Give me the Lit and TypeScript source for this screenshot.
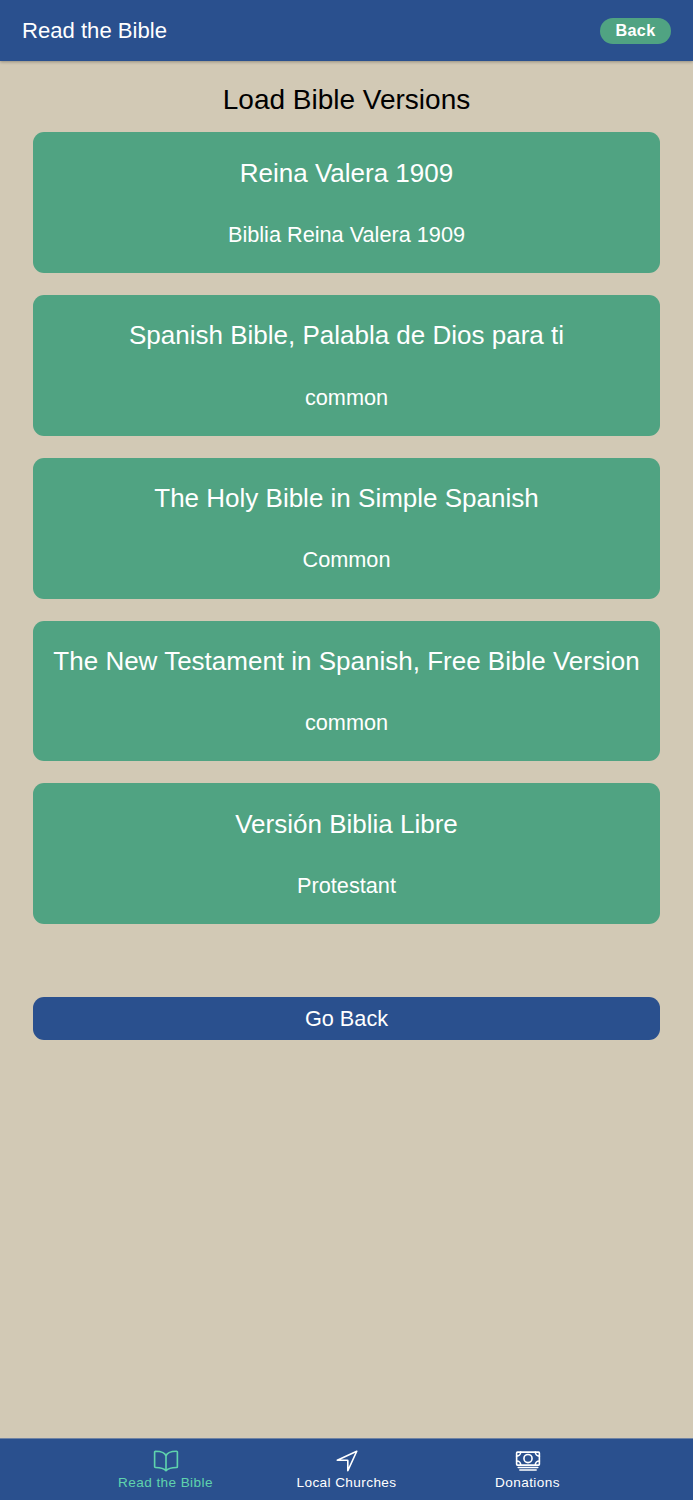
import { LitElement, html, css } from "lit";
import { customElement } from "lit/decorators.js";

const versions = [
  ["Reina Valera 1909", "Biblia Reina Valera 1909"],
  ["Spanish Bible, Palabla de Dios para ti", "common"],
  ["The Holy Bible in Simple Spanish", "Common"],
  ["The New Testament in Spanish, Free Bible Version", "common"],
  ["Versión Biblia Libre", "Protestant"],
];

@customElement("app-root")
export class AppRoot extends LitElement {
  static styles = css`
    :host {
      display: flex;
      flex-direction: column;
      height: 1500px;
      background: #d2c9b5;
      font-family: "Liberation Sans", Arial, sans-serif;
      color: #fff;
      overflow: hidden;
    }
    .header {
      flex: none;
      height: 61px;
      box-sizing: border-box;
      background: #2a508e;
      box-shadow: 0 1px 3px rgba(0, 0, 0, 0.3);
      display: flex;
      align-items: center;
      justify-content: space-between;
      padding: 0 22px;
      position: relative;
    }
    .header-title { font-size: 22.1px; }
    .back {
      background: #50a382;
      border-radius: 13px;
      width: 71px;
      height: 26px;
      display: flex;
      align-items: center;
      justify-content: center;
      font-size: 16.2px;
      font-weight: 700;
      letter-spacing: 0.3px;
    }
    .main {
      flex: 1;
      display: flex;
      flex-direction: column;
      padding: 0 32.6px;
    }
    h1 {
      margin: 0;
      height: 71.2px;
      line-height: 77px;
      text-align: center;
      font-size: 28px;
      font-weight: 400;
      color: #000;
    }
    .list { display: flex; flex-direction: column; gap: 22px; }
    .card {
      height: 140.8px;
      background: #50a382;
      border-radius: 11px;
      display: flex;
      flex-direction: column;
      align-items: center;
      text-align: center;
    }
    .card-title { font-size: 26px; line-height: 31px; margin-top: 25.5px; }
    .card-sub { font-size: 21.7px; line-height: 27px; margin-top: 32.2px; }
    .go {
      margin-top: 72.8px;
      height: 43px;
      box-sizing: border-box;
      padding-top: 1px;
      background: #2a508e;
      border-radius: 11px;
      display: flex;
      align-items: center;
      justify-content: center;
      font-size: 21.7px;
    }
    .tabs {
      flex: none;
      height: 62px;
      box-sizing: border-box;
      background: #2a508e;
      border-top: 1px solid #6f83a4;
      display: grid;
      grid-template-columns: 181px 181px 181px;
      justify-content: center;
    }
    .tab {
      display: flex;
      flex-direction: column;
      align-items: center;
      padding-top: 9px;
      font-size: 13.6px;
      letter-spacing: 0.4px;
      line-height: 18px;
    }
    .tab svg {
      display: block;
      width: 26px;
      height: 26px;
      fill: none;
      stroke: currentColor;
      stroke-width: 32;
      stroke-linecap: round;
      stroke-linejoin: round;
    }
    .tab.active { color: #5fd3ad; }
  `;

  render() {
    return html`
      <div class="header">
        <div class="header-title">Read the Bible</div>
        <div class="back">Back</div>
      </div>
      <div class="main">
        <h1>Load Bible Versions</h1>
        <div class="list">
          ${versions.map(
            ([t, s]) => html`<div class="card">
              <div class="card-title">${t}</div>
              <div class="card-sub">${s}</div>
            </div>`
          )}
        </div>
        <div class="go">Go Back</div>
      </div>
      <div class="tabs">
        <div class="tab active">
          <svg viewBox="0 0 512 512"><path d="M256 160c16-63.16 76.43-95.41 208-96a15.94 15.94 0 0 1 16 16v288a16 16 0 0 1-16 16c-128 0-177.45 25.81-208 64-30.37-38-80-64-208-64-9.88 0-16-8.05-16-17.93V80a15.94 15.94 0 0 1 16-16c131.57.59 192 32.84 208 96zM256 160v288"/></svg>
          <span>Read the Bible</span>
        </div>
        <div class="tab">
          <svg viewBox="0 0 512 512"><path d="M448 64L64 240.14h200a8 8 0 0 1 8 8V448z"/></svg>
          <span>Local Churches</span>
        </div>
        <div class="tab">
          <svg viewBox="0 0 512 512"><rect x="32" y="80" width="448" height="256" rx="16" ry="16"/><path d="M64 384h384M96 432h320"/><circle cx="256" cy="208" r="80"/><path d="M480 160a80 80 0 0 1-80-80M32 160a80 80 0 0 0 80-80M480 256a80 80 0 0 0-80 80M32 256a80 80 0 0 1 80 80"/></svg>
          <span>Donations</span>
        </div>
      </div>
    `;
  }
}
